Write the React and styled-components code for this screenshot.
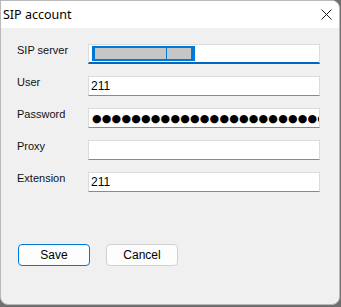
import styled, { createGlobalStyle } from "styled-components";

const GlobalStyle = createGlobalStyle`
  html, body {
    margin: 0;
    padding: 0;
    background: #6f6f6f;
  }
  body {
    width: 341px;
    height: 307px;
    overflow: hidden;
  }
`;

const Window = styled.div`
  width: 340px;
  height: 305px;
  box-sizing: border-box;
  border: 1px solid #b9b9b9;
  border-radius: 0 8px 8px 8px;
  overflow: hidden;
  display: flex;
  flex-direction: column;
  background: #f0f0f0;
`;

const TitleBar = styled.div`
  height: 27px;
  background: #ffffff;
  display: flex;
  align-items: center;
  justify-content: space-between;
  padding: 0 7px 0 2px;
  flex-shrink: 0;
`;

const Title = styled.span`
  font-family: "Noto Sans", "Open Sans", sans-serif;
  font-size: 12.5px;
  color: #000;
  margin-top: -1px;
`;

const CloseIcon = () => (
  <svg width="11" height="11" viewBox="0 0 11 11">
    <path d="M0.5 0.5 L10.5 10.5 M10.5 0.5 L0.5 10.5" stroke="#1a1a1a" strokeWidth="1" fill="none" />
  </svg>
);

const Body = styled.div`
  flex: 1;
  padding: 16px 0 0 16px;
  display: flex;
  flex-direction: column;
`;

const Form = styled.div`
  display: grid;
  grid-template-columns: 71px 232px;
  row-gap: 12px;
`;

const Label = styled.label`
  font-family: "Liberation Sans", Arial, sans-serif;
  font-size: 11px;
  line-height: 13px;
  color: #111;
  padding-top: 0;
`;

const Field = styled.div`
  height: 20px;
  box-sizing: border-box;
  background: #ffffff;
  border: 1px solid #dcdcdc;
  border-bottom: ${(p) => (p.$focused ? "2px solid #0067c0" : "1px solid #8a8a8a")};
  display: flex;
  align-items: center;
  padding: 0 2px;
  overflow: hidden;
  white-space: nowrap;
  font-family: "Liberation Sans", Arial, sans-serif;
  font-size: 12px;
  color: #000;
`;

const Selection = styled.span`
  display: inline-flex;
  align-items: center;
  height: 15px;
  width: 103px;
  margin-left: 1px;
  background: #0078d7;
  padding: 0 3px;
  box-sizing: border-box;
`;

const Redacted = styled.span`
  display: block;
  height: 11px;
  width: ${(p) => p.$w}px;
  margin-right: ${(p) => p.$gap || 0}px;
  background: #c6c6c6;
`;

const Dots = styled.span`
  font-family: "DejaVu Sans", sans-serif;
  font-size: 11px;
  letter-spacing: 0.2px;
  margin-left: 1px;
  color: #000;
`;

const ButtonRow = styled.div`
  display: flex;
  gap: 16px;
  margin-top: 52px;
  padding-left: 1px;
`;

const Button = styled.button`
  width: 72px;
  height: 22px;
  box-sizing: border-box;
  background: #fdfdfd;
  border: 1px solid ${(p) => (p.$primary ? "#0078d4" : "#d0d0d0")};
  border-radius: 4px;
  font-family: "Liberation Sans", Arial, sans-serif;
  font-size: 12px;
  color: #000;
  padding: 0;
`;

export default function App() {
  return (
    <>
      <GlobalStyle />
      <Window>
        <TitleBar>
          <Title>SIP account</Title>
          <CloseIcon />
        </TitleBar>
        <Body>
          <Form>
            <Label>SIP server</Label>
            <Field $focused>
              <Selection>
                <Redacted $w={71} $gap={1} />
                <Redacted $w={24} />
              </Selection>
            </Field>
            <Label>User</Label>
            <Field>211</Field>
            <Label>Password</Label>
            <Field>
              <Dots>{"●".repeat(27)}</Dots>
            </Field>
            <Label>Proxy</Label>
            <Field />
            <Label>Extension</Label>
            <Field>211</Field>
          </Form>
          <ButtonRow>
            <Button $primary>Save</Button>
            <Button>Cancel</Button>
          </ButtonRow>
        </Body>
      </Window>
    </>
  );
}
